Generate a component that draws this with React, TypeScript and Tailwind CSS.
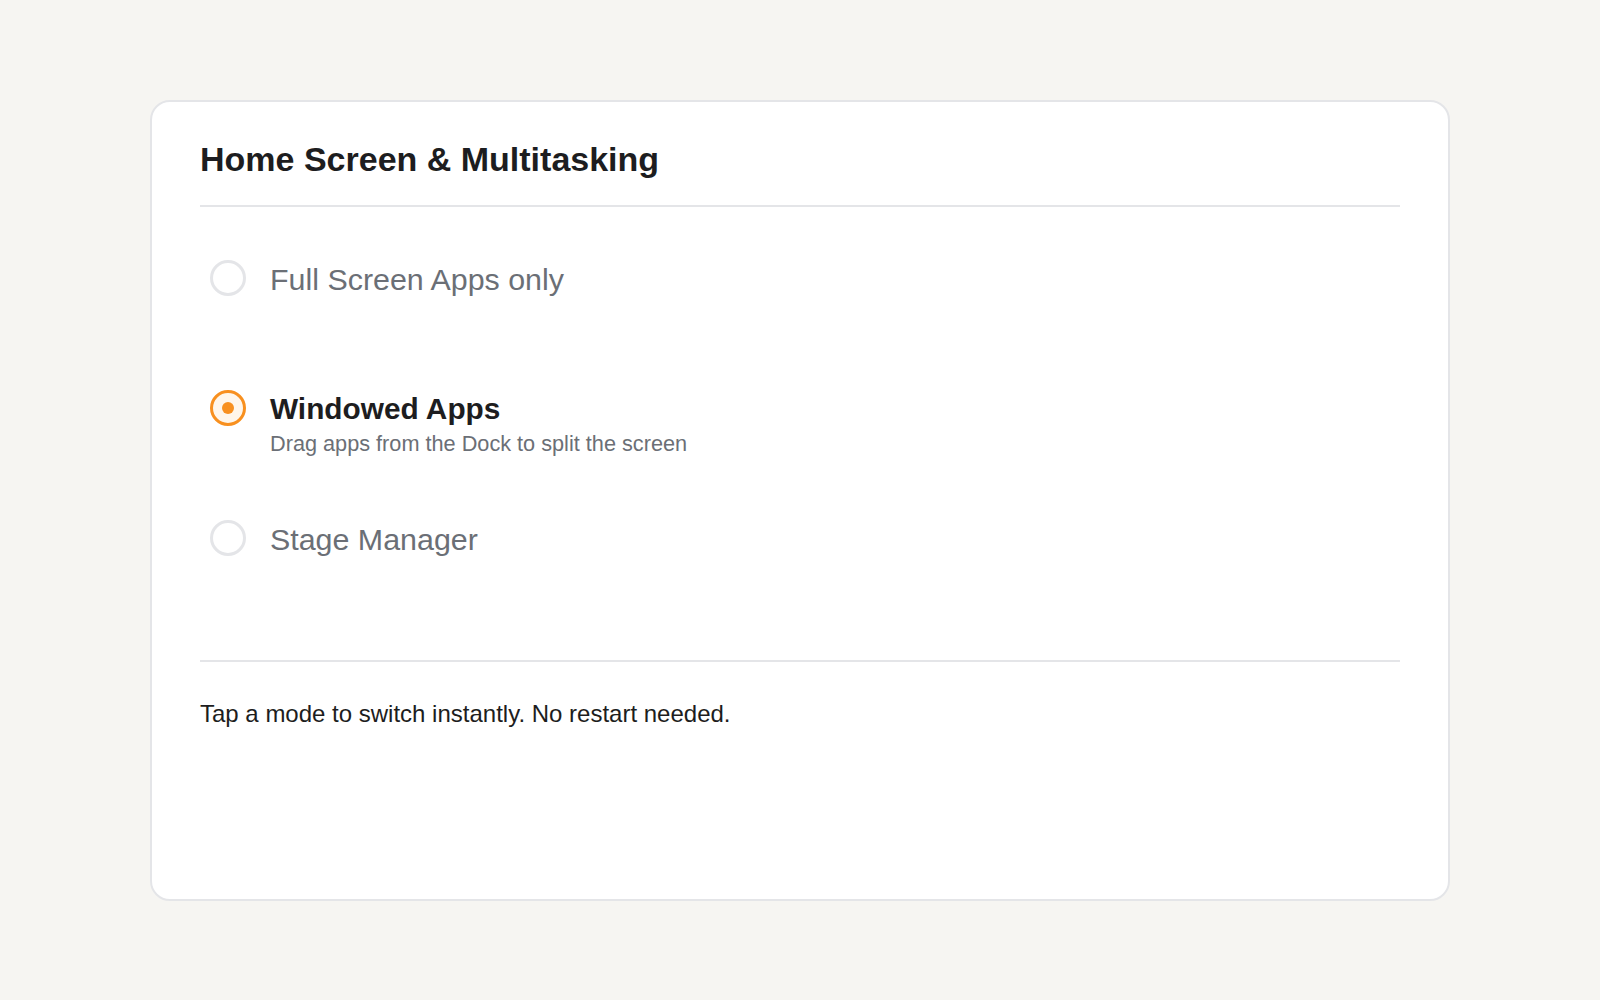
import { useState } from "react";

type Mode = {
  id: string;
  label: string;
  hint: string;
};

const MODES: Mode[] = [
  { id: "full", label: "Full Screen Apps only", hint: "Apps always open full screen" },
  { id: "windowed", label: "Windowed Apps", hint: "Drag apps from the Dock to split the screen" },
  { id: "stage", label: "Stage Manager", hint: "Group apps into stages on the side" },
];

function Radio({ checked }: { checked: boolean }) {
  if (checked) {
    return (
      <span className="-mt-px ml-2.5 flex h-9 w-9 shrink-0 items-center justify-center rounded-full border-[3px] border-[#f8901f] bg-[#fff6ea]">
        <span className="h-3 w-3 rounded-full bg-[#f8901f]" />
      </span>
    );
  }
  return <span className="-mt-px ml-2.5 h-9 w-9 shrink-0 rounded-full border-[3px] border-[#e4e5e8] bg-white" />;
}

export default function App() {
  const [selected, setSelected] = useState("windowed");

  return (
    <div className="min-h-screen bg-[#f6f5f2] pt-[100px] font-['Liberation_Sans',Arial,sans-serif]">
      <div className="mx-auto h-[801px] w-[1300px] rounded-[20px] border-2 border-[#e4e5e8] bg-white px-12 pt-8">
        <h1 className="border-b-2 border-[#e4e5e8] pb-5 text-[34px] font-bold leading-[51px] text-[#1d1d20]">
          Home Screen &amp; Multitasking
        </h1>

        <div className="pt-[54px]">
          {MODES.map((mode) => {
            const on = mode.id === selected;
            return (
              <button
                key={mode.id}
                type="button"
                onClick={() => setSelected(mode.id)}
                className="flex h-[130px] w-full items-start gap-6 text-left"
              >
                <Radio checked={on} />
                <div className="flex flex-col">
                  <span
                    className={
                      on
                        ? "text-[29.8px] font-bold leading-9 text-[#1d1d20]"
                        : "text-[30.4px] leading-9 text-[#6b6f76]"
                    }
                  >
                    {mode.label}
                  </span>
                  {on && (
                    <span className="text-[21.7px] leading-[33px] text-[#6b6f76]">{mode.hint}</span>
                  )}
                </div>
              </button>
            );
          })}
        </div>

        <div className="mt-[9px] border-t-2 border-[#e4e5e8] pt-[34px]">
          <p className="text-[24px] leading-9 text-[#1d1d20]">
            Tap a mode to switch instantly. No restart needed.
          </p>
        </div>
      </div>
    </div>
  );
}
